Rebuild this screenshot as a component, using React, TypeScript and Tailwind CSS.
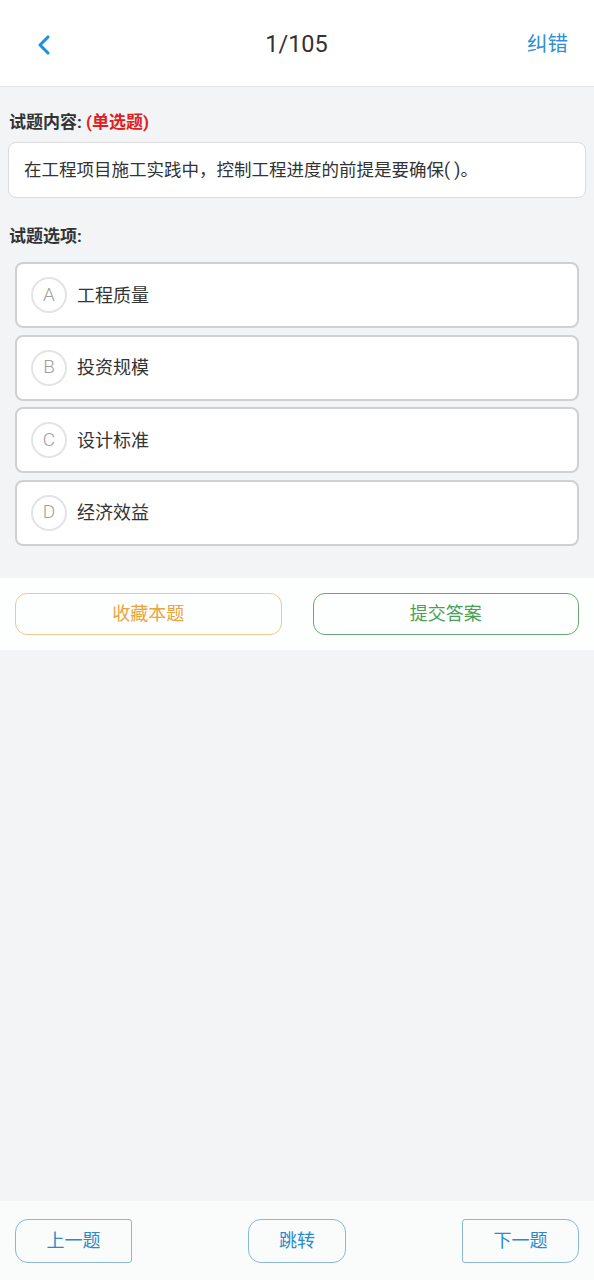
import { ChevronLeft } from "lucide-react";

const options = [
  { key: "A", text: "工程质量" },
  { key: "B", text: "投资规模" },
  { key: "C", text: "设计标准" },
  { key: "D", text: "经济效益" },
];

const font = {
  fontFamily: '"Roboto", "Noto Sans CJK SC", sans-serif',
};

export default function App() {
  return (
    <div className="flex h-[1280px] w-full flex-col bg-[#f3f4f6] text-[#333]" style={font}>
      {/* header */}
      <header className="flex h-[87px] shrink-0 items-center justify-between border-b border-[#e6e6e6] bg-white pt-[3px] pr-[26px] pl-[28px]">
        <ChevronLeft className="h-[32px] w-[32px] text-[#1e8ee0]" strokeWidth={2.3} />
        <h1 className="ml-[6px] text-[23.5px] text-[#333]">1/105</h1>
        <button className="text-[20.5px] text-[#2f8fd6]">纠错</button>
      </header>

      <section className="px-[8px]">
        <p className="mt-[24px] pl-[1px] text-[17px] leading-[22px] font-bold text-[#333]">
          试题内容: <span className="text-[#e02020]">(单选题)</span>
        </p>
        <div className="mt-[9px] flex h-[56px] items-center rounded-[8px] border border-[#dcdcdc] bg-white px-[15px] text-[17.5px] text-[#333]">
          在工程项目施工实践中，控制工程进度的前提是要确保( )。
        </div>
        <p className="mt-[27px] pl-[1px] text-[17px] leading-[22px] font-bold text-[#333]">
          试题选项:
        </p>
      </section>

      <ul className="mt-[15px] flex flex-col gap-[6.5px] px-[15px]">
        {options.map((o) => (
          <li
            key={o.key}
            className="flex h-[66px] items-center rounded-[8px] border-2 border-[#d0d0d0] bg-white pl-[14px]"
          >
            <span className="flex h-[36px] w-[36px] items-center justify-center rounded-full border-2 border-[#e4e4e4] text-[19px] font-light text-[#a0a0a0]">
              {o.key}
            </span>
            <span className="ml-[10px] text-[18px] text-[#333]">{o.text}</span>
          </li>
        ))}
      </ul>

      <div className="mt-[32px] flex gap-[31px] bg-[#fdfefe] px-[15px] py-[15px]">
        <button className="h-[42px] flex-1 rounded-[12px] border border-[#f0c88a] text-[18px] text-[#e8a440]">
          收藏本题
        </button>
        <button className="h-[42px] flex-1 rounded-[12px] border border-[#6aa872] text-[18px] text-[#4a9e56]">
          提交答案
        </button>
      </div>

      <div className="flex-1" />

      <footer className="flex h-[79px] shrink-0 items-center justify-between bg-[#fafbfb] px-[15px]">
        <button className="h-[44px] w-[117px] rounded-l-[13px] rounded-r-[3px] border border-[#8cb8d4] text-[18px] text-[#2b8acb]">
          上一题
        </button>
        <button className="h-[44px] w-[98px] rounded-[13px] border border-[#8cb8d4] text-[18px] text-[#2b8acb]">
          跳转
        </button>
        <button className="h-[44px] w-[117px] rounded-l-[3px] rounded-r-[13px] border border-[#8cb8d4] text-[18px] text-[#2b8acb]">
          下一题
        </button>
      </footer>
    </div>
  );
}
